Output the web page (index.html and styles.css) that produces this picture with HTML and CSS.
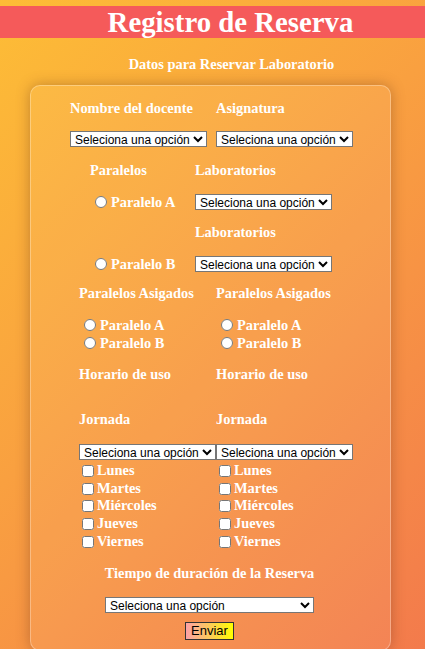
FILE: index.html
```html
<!DOCTYPE html>
<html lang="es">
<head>
    <meta charset="UTF-8">
    <meta name="viewport" content="width=device-width, initial-scale=1.0">
    <title>Registro de Reserva</title>
    <link rel="stylesheet" href="styles.css">
</head>
<body>
    <header class="banner">
        <h1>Registro de Reserva</h1>
    </header>
    <h2 class="subtitle">Datos para Reservar Laboratorio</h2>

    <form class="card">
        <div class="block block-docente">
            <label class="tag">Nombre del docente</label>
            <label class="tag">Asignatura</label>
            <select class="pick"><option>Seleciona una opción</option></select>
            <select class="pick"><option>Seleciona una opción</option></select>
        </div>

        <div class="block block-paralelos">
            <label class="tag">Paralelos</label>
            <label class="tag">Laboratorios</label>
            <label class="choice"><input type="radio" name="paralelo">Paralelo A</label>
            <select class="pick"><option>Seleciona una opción</option></select>
            <span></span>
            <label class="tag lab-again">Laboratorios</label>
            <label class="choice"><input type="radio" name="paralelo">Paralelo B</label>
            <select class="pick"><option>Seleciona una opción</option></select>
        </div>

        <div class="block block-asignados">
            <div class="col">
                <label class="tag">Paralelos Asigados</label>
                <div class="options">
                    <label class="choice"><input type="radio" name="asig1">Paralelo A</label>
                    <label class="choice"><input type="radio" name="asig1">Paralelo B</label>
                </div>
            </div>
            <div class="col">
                <label class="tag">Paralelos Asigados</label>
                <div class="options">
                    <label class="choice"><input type="radio" name="asig2">Paralelo A</label>
                    <label class="choice"><input type="radio" name="asig2">Paralelo B</label>
                </div>
            </div>
        </div>

        <div class="block block-horario">
            <div class="col">
                <label class="tag">Horario de uso</label>
                <label class="tag jornada">Jornada</label>
                <select class="pick"><option>Seleciona una opción</option></select>
                <div class="days">
                    <label class="day"><input type="checkbox">Lunes</label>
                    <label class="day"><input type="checkbox">Martes</label>
                    <label class="day"><input type="checkbox">Miércoles</label>
                    <label class="day"><input type="checkbox">Jueves</label>
                    <label class="day"><input type="checkbox">Viernes</label>
                </div>
            </div>
            <div class="col">
                <label class="tag">Horario de uso</label>
                <label class="tag jornada">Jornada</label>
                <select class="pick"><option>Seleciona una opción</option></select>
                <div class="days">
                    <label class="day"><input type="checkbox">Lunes</label>
                    <label class="day"><input type="checkbox">Martes</label>
                    <label class="day"><input type="checkbox">Miércoles</label>
                    <label class="day"><input type="checkbox">Jueves</label>
                    <label class="day"><input type="checkbox">Viernes</label>
                </div>
            </div>
        </div>

        <div class="block block-tiempo">
            <label class="tag">Tiempo de duración de la Reserva</label>
            <select class="pick wide"><option>Seleciona una opción</option></select>
            <button type="submit" class="send">Enviar</button>
        </div>
    </form>
</body>
</html>
```

FILE: styles.css
```css
body {
    margin: 0;
    padding: 6px 0 4px;
    font-family: "Liberation Serif", "Times New Roman", serif;
    color: #fff;
    background: linear-gradient(135deg, #fdbd36 0%, #f9a040 45%, #f37a4c 100%);
    min-height: 100vh;
    box-sizing: border-box;
}

.banner {
    background-color: #f55a5a;
    height: 32px;
    padding-left: 36px;
    text-align: center;
}

.banner h1 {
    margin: 0;
    font-size: 28.8px;
    line-height: 32px;
    font-weight: bold;
}

.subtitle {
    margin: 18px 0 12px;
    padding-left: 38px;
    text-align: center;
    font-size: 14.4px;
    line-height: 17px;
}

.card {
    margin: 0 34px 0 30px;
    padding: 14px 0 10px;
    border: 1px solid rgba(255, 255, 255, 0.3);
    border-radius: 10px;
    background-color: rgba(255, 255, 255, 0.06);
    box-shadow: 0 0 14px rgba(90, 40, 20, 0.35);
}

.tag {
    display: block;
    font-size: 14.4px;
    line-height: 17px;
    font-weight: bold;
}

.pick {
    width: 137px;
    height: 16px;
    padding: 0;
    border: 1px solid #767676;
    border-radius: 0;
    background: #fff;
    color: #000;
    font-family: "Liberation Sans", Arial, sans-serif;
    font-size: 12px;
}

.choice, .day {
    display: flex;
    align-items: center;
    font-size: 14.4px;
    line-height: 18px;
    font-weight: bold;
}

.day {
    line-height: 17.7px;
}

.choice input {
    margin: 0 4px 0 5px;
    width: 12px;
    height: 12px;
}

.day input {
    margin: 0 3px 0 3px;
    width: 12px;
    height: 12px;
}

.block {
    display: grid;
}

.block-docente {
    grid-template-columns: 137px 137px;
    column-gap: 9px;
    row-gap: 14px;
    padding-left: 39px;
}

.block-paralelos {
    margin-top: 15px;
    grid-template-columns: 105px 137px;
    grid-template-rows: 17px 15px 17px 15px;
    row-gap: 15px;
    padding-left: 59px;
    align-items: center;
}

.block-asignados {
    margin-top: 14px;
    grid-template-columns: 137px 137px;
    padding-left: 48px;
}

.options {
    margin-top: 14px;
}

.block-horario {
    margin-top: 14px;
    grid-template-columns: 137px 137px;
    padding-left: 48px;
}

.jornada {
    margin-top: 28px;
    margin-bottom: 15px;
}

.days {
    margin-top: 1px;
}

.block-tiempo {
    margin-top: 14px;
    justify-items: center;
    padding-right: 2px;
}

.wide {
    width: 209px;
    margin-top: 15px;
}

.send {
    margin-top: 9px;
    padding: 0 5px;
    height: 18px;
    border: 1px solid #333;
    border-radius: 0;
    background: linear-gradient(to right, #fca1a6, #fdcf52 55%, #ffff00);
    color: #000;
    font-family: "Liberation Sans", Arial, sans-serif;
    font-size: 13px;
    cursor: pointer;
}
```
